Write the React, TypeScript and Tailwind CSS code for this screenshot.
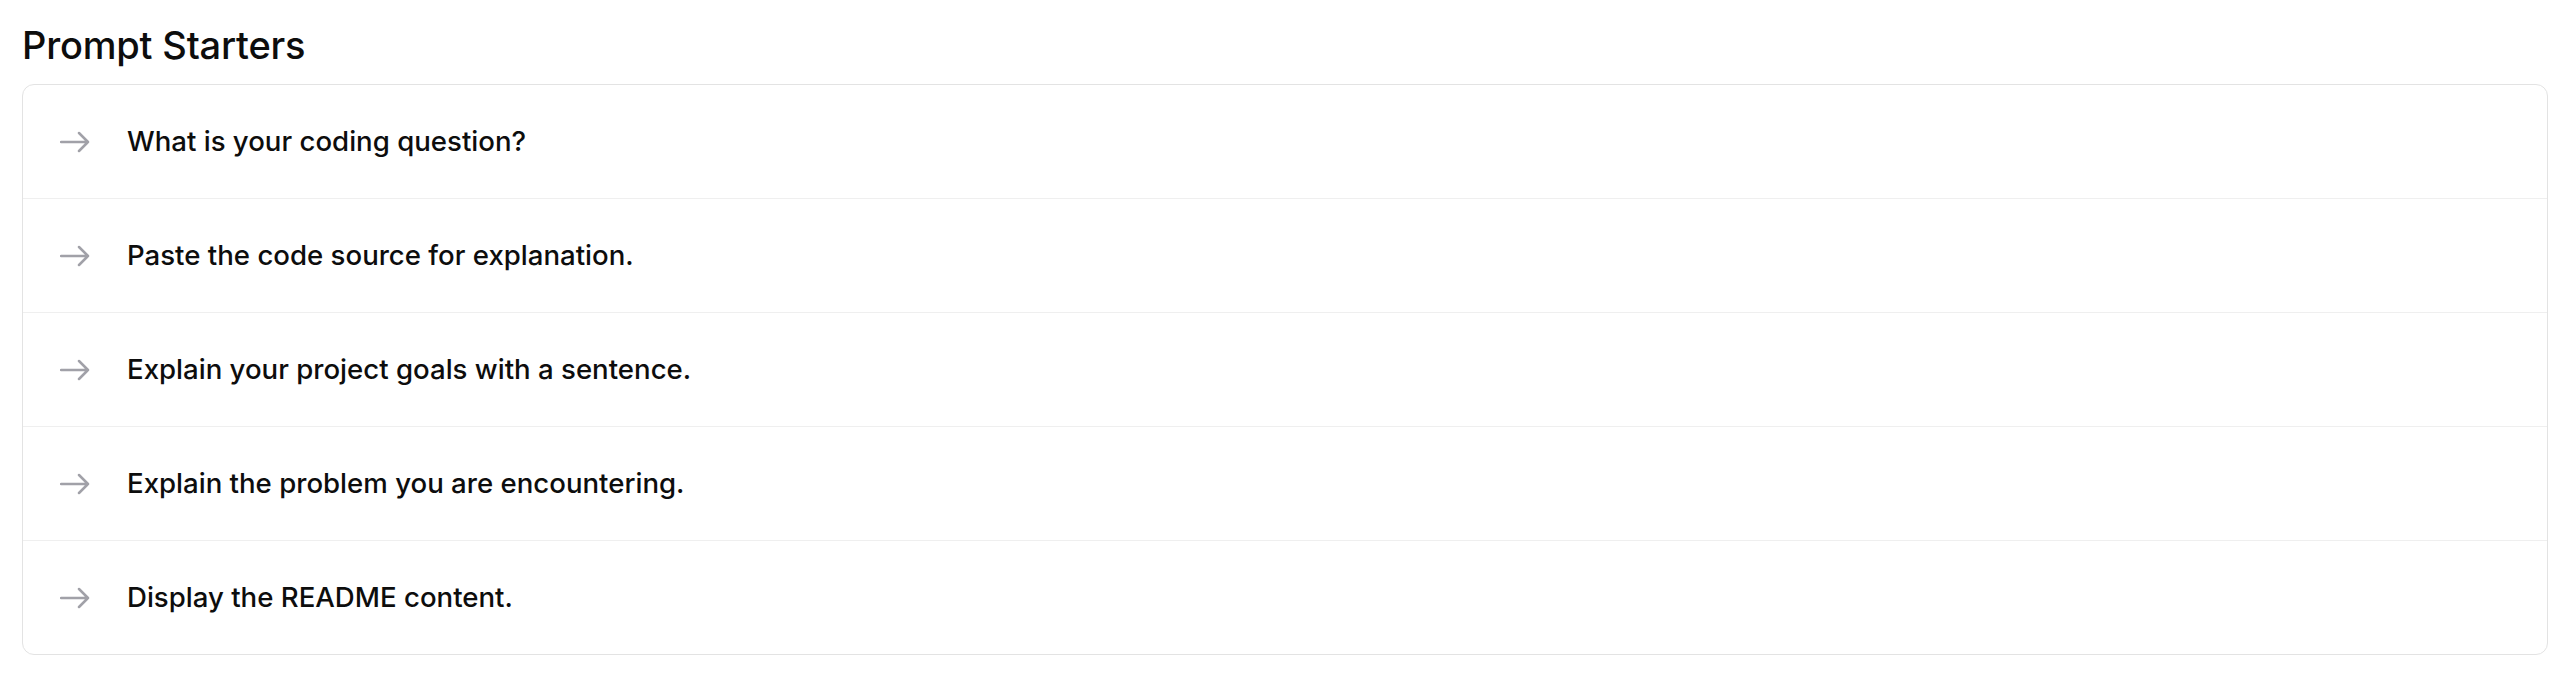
const STARTERS = [
  "What is your coding question?",
  "Paste the code source for explanation.",
  "Explain your project goals with a sentence.",
  "Explain the problem you are encountering.",
  "Display the README content.",
];

function Arrow() {
  return (
    <svg width="30" height="22" viewBox="0 0 30 22" fill="none" className="shrink-0 text-[#a1a1a8]">
      <path
        d="M1 11h27M19 2l9 9-9 9"
        stroke="currentColor"
        strokeWidth="2.5"
        strokeLinecap="round"
        strokeLinejoin="round"
      />
    </svg>
  );
}

export default function App() {
  return (
    <div
      className="min-h-screen bg-white pl-[22px] pr-[28px] pt-[22px] text-[#0d0d0d]"
      style={{ fontFamily: "Inter, 'Noto Sans', sans-serif" }}
    >
      <h2 className="text-[38px] leading-[47px] font-medium tracking-[-0.005em] mb-[15px]">
        Prompt Starters
      </h2>
      <div className="rounded-xl border border-[#e3e3e3] bg-white overflow-hidden">
        {STARTERS.map((s, i) => (
          <div
            key={s}
            className={`flex items-center pl-[37px] ${
              i > 0 ? "h-[114px] border-t border-[#efefef]" : "h-[113px]"
            }`}
          >
            <Arrow />
            <span className="ml-[37px] text-[27.6px] font-medium">{s}</span>
          </div>
        ))}
      </div>
    </div>
  );
}
